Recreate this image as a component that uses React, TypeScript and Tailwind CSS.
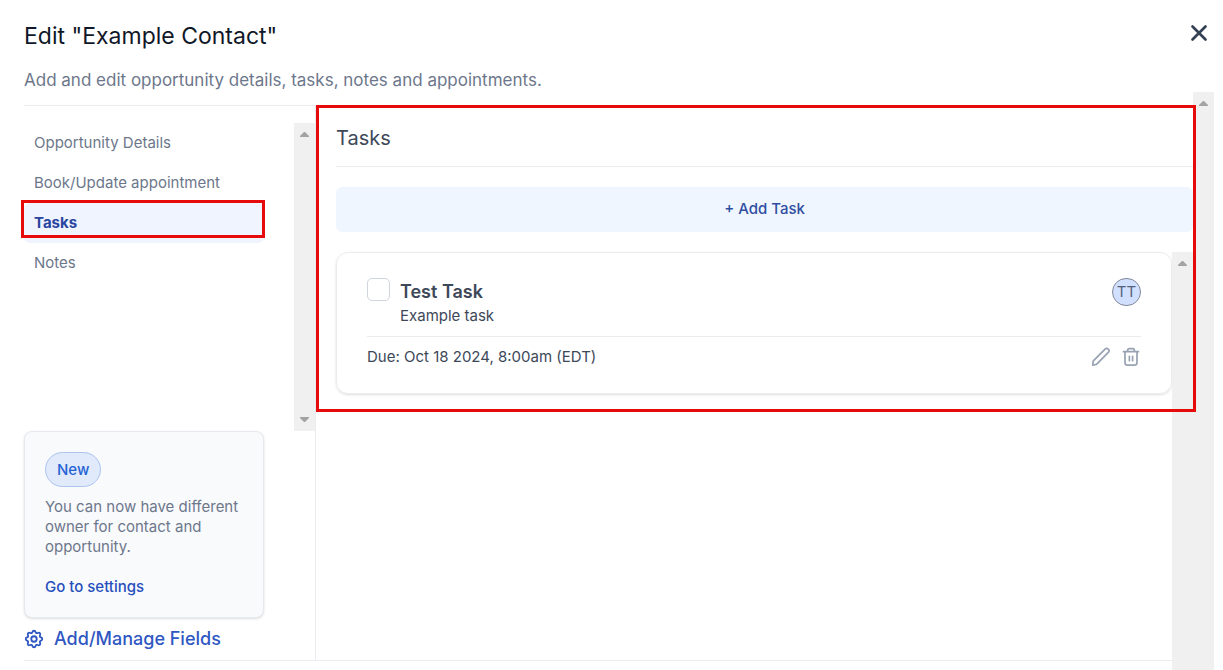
import React from "react";
import { HiOutlineCog } from "react-icons/hi";

const navItems = [
  { label: "Opportunity Details" },
  { label: "Book/Update appointment" },
  { label: "Tasks", active: true },
  { label: "Notes" },
];

const ArrowUp = () => (
  <svg width="9" height="5" viewBox="0 0 9 5" fill="#a3a3a3">
    <path d="M4 0h1l4 4v1H0V4z" />
  </svg>
);

const ArrowDown = () => (
  <svg width="9" height="5" viewBox="0 0 9 5" fill="#a3a3a3">
    <path d="M0 0h9v1L5 5H4L0 1z" />
  </svg>
);

const ScrollTrack = ({ down = false }: { down?: boolean }) => (
  <div className="flex w-[21px] shrink-0 flex-col items-center justify-between bg-[#f0f0f0] py-[9px]">
    <ArrowUp />
    {down && <ArrowDown />}
  </div>
);

const PencilIcon = () => (
  <svg
    width="20"
    height="20"
    viewBox="0 0 20 20"
    fill="none"
    stroke="currentColor"
    strokeWidth="1.7"
    strokeLinecap="round"
    strokeLinejoin="round"
  >
    <path d="M1.8 18.2l.3-3.500c0-.5.2-.8.5-1.100L14.100 2.200a2.300 2.300 0 0 1 3.200 0 2.300 2.300 0 0 1 0 3.200L6 16.900c-.3.3-.6.5-1.100.6z" />
  </svg>
);

const TrashIcon = () => (
  <svg
    width="20"
    height="20"
    viewBox="0 0 20 20"
    fill="none"
    stroke="currentColor"
    strokeWidth="1.7"
    strokeLinecap="round"
    strokeLinejoin="round"
  >
    <path d="M2.500 4.700h15M6.600 4.700V3.400c0-1 .7-1.700 1.700-1.700h3.400c1 0 1.700.7 1.700 1.700v1.300M4 4.700v10.800c0 1.700 1 2.700 2.700 2.700h6.600c1.700 0 2.700-1 2.700-2.700V4.700M8.400 9.300v4.400M11.600 9.300v4.400" />
  </svg>
);

const CloseIcon = () => (
  <svg
    width="18"
    height="18"
    viewBox="0 0 18 18"
    fill="none"
    stroke="currentColor"
    strokeWidth="2.7"
    strokeLinecap="round"
  >
    <path d="M2.500 2.500l13 13M15.500 2.500l-13 13" />
  </svg>
);

const Sidebar = () => {
  return (
    <aside className="mb-[9px] flex w-[292px] shrink-0 flex-col border-r border-b border-[#eaecf0]">
      <div className="flex flex-1 justify-between pt-[17px]">
        <nav className="w-60">
          {navItems.map((item) => (
            <div key={item.label} className="relative">
              <button
                className={
                  item.active
                    ? "h-10 w-full rounded-md bg-[#eff4ff] px-[10px] text-left font-bold text-[#2a45a0]"
                    : "h-10 w-full px-[10px] text-left text-[#6d778b]"
                }
              >
                {item.label}
              </button>
              {item.active && (
                <div className="pointer-events-none absolute -top-[3px] -right-px bottom-[5px] -left-[3px] border-3 border-[#e60a0a]"></div>
              )}
            </div>
          ))}
        </nav>
        <ScrollTrack down />
      </div>

      <div className="w-60 rounded-lg border border-[#e6e9ee] bg-[#f9fafc] p-5 text-[#6d778b] shadow-sm">
        <span className="inline-flex h-[35px] items-center rounded-full border border-[#adc4ef] bg-[#e0eafb] px-[11px] pt-px font-medium text-[#2563d4]">
          New
        </span>
        <p className="mt-[10px] leading-5">
          You can now have different owner for contact and opportunity.
        </p>
        <a href="#" className="mt-5 block leading-5 font-medium text-[#2750bd]">
          Go to settings
        </a>
      </div>

      <button className="flex h-[42px] items-center gap-[9px] text-lg font-medium text-[#2f57c2]">
        <HiOutlineCog className="-ml-px size-[22px]" />
        Add/Manage Fields
      </button>
    </aside>
  );
};

const TaskCard = () => {
  return (
    <div className="rounded-xl border border-[#eaecf0] px-[30px] pt-[25px] pb-[26px] text-[#3d4859] shadow-sm">
      <div className="flex items-start border-b border-[#eaecf0] pb-[10px]">
        <input
          id="task"
          type="checkbox"
          className="size-[23px] appearance-none rounded-[5px] border border-[#d0d5dd] bg-white"
        />
        <div className="ml-[10px] flex-1 pt-[2px]">
          <label htmlFor="task" className="block text-lg leading-6 font-semibold">
            Test Task
          </label>
          <p className="mt-[2px] leading-5">Example task</p>
        </div>
        <div className="flex h-7 w-[29px] items-center justify-center rounded-full border border-[#83889a] bg-[#d1e0ff] text-[#56627a]">
          TT
        </div>
      </div>
      <div className="flex items-center justify-between pt-[10px]">
        <span className="leading-5">Due: Oct 18 2024, 8:00am (EDT)</span>
        <div className="flex gap-[10px] text-[#98a2b3]">
          <button aria-label="Edit task">
            <PencilIcon />
          </button>
          <button aria-label="Delete task">
            <TrashIcon />
          </button>
        </div>
      </div>
    </div>
  );
};

const TasksPanel = () => {
  return (
    <main className="relative flex flex-1 flex-col">
      <div className="pl-5">
        <h2 className="border-b border-[#eaecf0] pt-[18px] pb-[14px] text-xl text-[#3d4859]">
          Tasks
        </h2>
        <button className="mt-5 mb-5 h-[45px] w-full rounded-md bg-[#eff6ff] font-medium text-[#304e9f]">
          + Add Task
        </button>
      </div>

      <div className="flex flex-1">
        <div className="mb-[9px] flex-1 border-b border-[#eaecf0] pl-5">
          <TaskCard />
        </div>
        <ScrollTrack />
      </div>

      <div className="pointer-events-none absolute -top-px -right-[3px] left-0 h-[307px] border-3 border-[#e60a0a]"></div>
    </main>
  );
};

const App = () => {
  return (
    <div className="flex h-screen flex-col overflow-hidden bg-white font-['Inter',sans-serif] text-[15px]">
      <header className="flex h-[92px] shrink-0 justify-between pl-6">
        <div className="pt-[22px]">
          <h1 className="text-[23px] leading-7 text-[#101828]">
            Edit "Example Contact"
          </h1>
          <p className="mt-4 text-[17px] leading-7 text-[#6d778b]">
            Add and edit opportunity details, tasks, notes and appointments.
          </p>
        </div>
        <button
          aria-label="Close"
          className="mt-6 mr-[15px] h-[18px] text-[#344054]"
        >
          <CloseIcon />
        </button>
      </header>

      <div className="flex min-h-0 flex-1 pr-[9px] pl-6">
        <div className="flex flex-1 pt-[13px]">
          <div className="flex flex-1 border-t border-[#eaecf0]">
            <Sidebar />
            <TasksPanel />
          </div>
        </div>
        <ScrollTrack />
      </div>
    </div>
  );
};

export default App;
